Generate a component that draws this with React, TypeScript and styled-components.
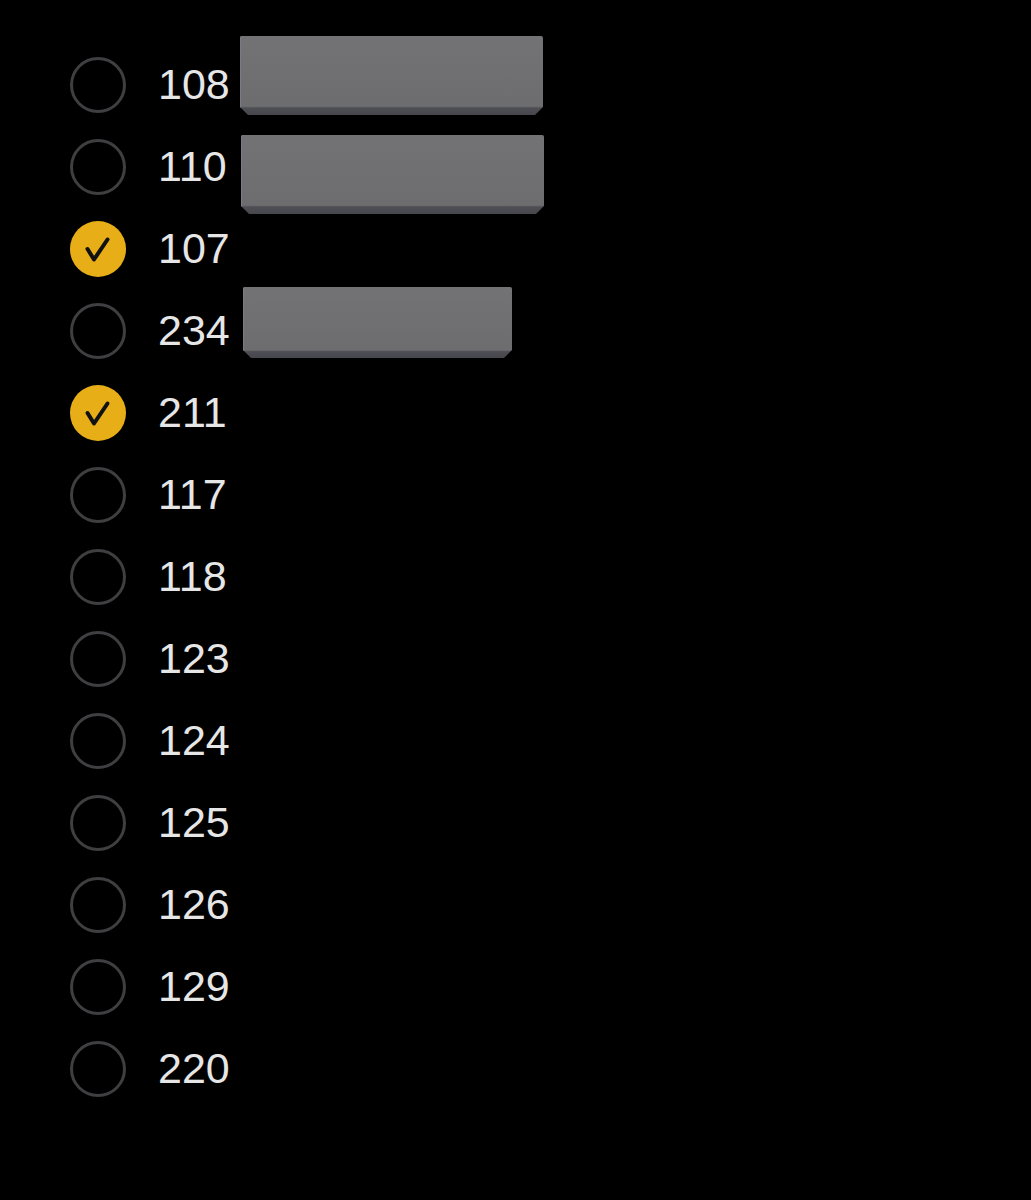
import styled, { createGlobalStyle } from 'styled-components'

const GlobalStyle = createGlobalStyle`
  html, body {
    margin: 0;
    padding: 0;
    background: #000;
  }
  body {
    font-family: "Liberation Sans", Arial, sans-serif;
  }
`

const Page = styled.div`
  width: 1031px;
  height: 1200px;
  background: #000;
  overflow: hidden;
`

const List = styled.ul`
  margin: 0;
  padding: 44px 0 0 70px;
  list-style: none;
  display: flex;
  flex-direction: column;
`

const Row = styled.li`
  position: relative;
  height: 82px;
  display: flex;
  align-items: center;
  gap: 32px;
`

const Circle = styled.span<{ $checked: boolean }>`
  width: 56px;
  height: 56px;
  box-sizing: border-box;
  border-radius: 50%;
  flex-shrink: 0;
  display: flex;
  align-items: center;
  justify-content: center;
  border: ${({ $checked }) => ($checked ? 'none' : '3px solid #3f3f42')};
  background: ${({ $checked }) => ($checked ? '#e7ae17' : 'transparent')};
`

const Label = styled.span`
  color: #e6e6e6;
  font-size: 43px;
  line-height: 1;
  margin-top: -2px;
`

const Redaction = styled.div<{ $left: number; $top: number; $width: number; $height: number }>`
  position: absolute;
  left: ${({ $left }) => $left}px;
  top: ${({ $top }) => $top}px;
  width: ${({ $width }) => $width}px;
  height: ${({ $height }) => $height}px;
  border-radius: 2px 2px 0 0;
  background: linear-gradient(180deg, #737375 0%, #6d6d6f 89%, #4e4e55 91%, #46464c 100%);
  clip-path: polygon(0 0, 100% 0, 100% calc(100% - 8px), calc(100% - 8px) 100%, 8px 100%, 0 calc(100% - 8px));
  box-shadow: inset 1px 0 0 #7a7a88;
`

const Check = () => (
  <svg width="30" height="30" viewBox="0 0 30 30" fill="none">
    <path d="M4.5 15 L11 25.5 L24.5 5.5" stroke="#111" strokeWidth="4" strokeLinecap="round" strokeLinejoin="round" />
  </svg>
)

type Item = {
  value: string
  checked?: boolean
  redaction?: { left: number; top: number; width: number; height: number }
}

const items: Item[] = [
  { value: '108', redaction: { left: 170, top: -8, width: 303, height: 79 } },
  { value: '110', redaction: { left: 171, top: 9, width: 303, height: 79 } },
  { value: '107', checked: true },
  { value: '234', redaction: { left: 173, top: -3, width: 269, height: 71 } },
  { value: '211', checked: true },
  { value: '117' },
  { value: '118' },
  { value: '123' },
  { value: '124' },
  { value: '125' },
  { value: '126' },
  { value: '129' },
  { value: '220' },
]

const App = () => {
  return (
    <Page>
      <GlobalStyle />
      <List>
        {items.map((item) => (
          <Row key={item.value}>
            <Circle $checked={!!item.checked}>{item.checked && <Check />}</Circle>
            <Label>{item.value}</Label>
            {item.redaction && (
              <Redaction
                $left={item.redaction.left}
                $top={item.redaction.top}
                $width={item.redaction.width}
                $height={item.redaction.height}
              />
            )}
          </Row>
        ))}
      </List>
    </Page>
  )
}

export default App
